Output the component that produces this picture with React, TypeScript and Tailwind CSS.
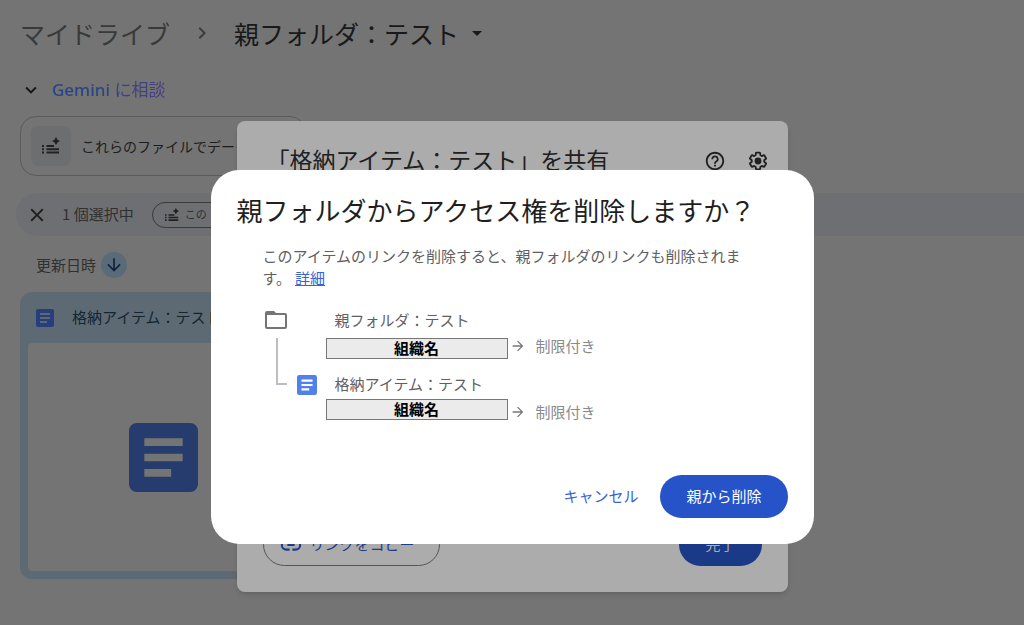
import { MdArrowDownward, MdArrowDropDown, MdArrowForward, MdChevronRight, MdClose, MdExpandMore, MdHelpOutline } from 'react-icons/md';

const fontStack = "font-['Noto_Sans_CJK_JP',sans-serif]";

function DocIcon({ className }: { className: string }) {
  return (
    <svg viewBox="0 0 18 18" className={className} aria-hidden="true">
      <path
        fill="currentColor"
        fillRule="evenodd"
        d="M2 0h14a2 2 0 0 1 2 2v14a2 2 0 0 1-2 2H2a2 2 0 0 1-2-2V2a2 2 0 0 1 2-2zM4 4v2h10V4zM4 8v2h10V8zM4 12v2h7v-2z"
      />
    </svg>
  );
}

function SummarizeIcon({ className }: { className: string }) {
  return (
    <svg viewBox="0 0 18 18" className={className} fill="currentColor" aria-hidden="true">
      <path d="M0 8h2v2H0zM4.500 8h7.500v2H4.500zM0 11.300h2v2H0zM4.500 11.300h12.500v2H4.500zM0 14.600h2v2H0zM4.500 14.600h12.500v2H4.500z" />
      <path d="M14 0Q14.900 3.100 18 4Q14.900 4.900 14 8Q13.100 4.900 10 4Q13.100 3.100 14 0z" />
    </svg>
  );
}

function FolderIcon() {
  return (
    <svg viewBox="0 0 22 18" className="h-[18px] w-[22px] text-[#757575]" aria-hidden="true">
      <path fill="currentColor" fillRule="evenodd" d="M2 0h7l2 2h9a2 2 0 0 1 2 2v12a2 2 0 0 1-2 2H2a2 2 0 0 1-2-2V2a2 2 0 0 1 2-2zM2 4v12h18V4z" />
    </svg>
  );
}

function LinkIcon() {
  return (
    <svg viewBox="0 0 24 24" className="size-[22px]" fill="none" stroke="currentColor" strokeWidth="2.300" aria-hidden="true">
      <path d="M10.500 17H7A5 5 0 0 1 7 7h3.500M13.500 7H17a5 5 0 0 1 0 10h-3.500M8 12h8" />
    </svg>
  );
}

function GearIcon() {
  return (
    <svg viewBox="0 0 24 24" className="size-5" fill="none" stroke="currentColor" strokeWidth="2.200" strokeLinejoin="round" aria-hidden="true">
      <path d="M19.430 12.980c.04-.32.07-.64.07-.98 0-.34-.03-.66-.07-.98l2.110-1.650c.19-.15.24-.42.12-.64l-2-3.460a.5.5 0 0 0-.61-.22l-2.490 1c-.52-.4-1.080-.73-1.690-.98l-.38-2.650A.488.488 0 0 0 14 2h-4c-.25 0-.46.18-.49.42l-.38 2.650c-.61.25-1.170.59-1.690.98l-2.490-1a.566.566 0 0 0-.18-.03c-.17 0-.34.09-.43.25l-2 3.460c-.13.22-.07.49.12.64l2.110 1.650c-.04.32-.07.65-.07.98 0 .33.03.66.07.98l-2.110 1.650c-.19.15-.24.42-.12.64l2 3.460a.5.5 0 0 0 .61.22l2.490-1c.52.4 1.080.73 1.690.98l.38 2.650c.03.24.24.42.49.42h4c.25 0 .46-.18.49-.42l.38-2.650c.61-.25 1.170-.59 1.690-.98l2.490 1c.06.02.12.03.18.03.17 0 .34-.09.43-.25l2-3.460c.12-.22.07-.49-.12-.64z" />
      <circle cx="12" cy="12" r="3" fill="currentColor" />
    </svg>
  );
}

function DriveView() {
  return (
    <main className="text-[#303030]">
      <nav className="flex h-[66px] items-center pl-5 text-[25px] leading-8">
        <a href="#" className="text-[#393939]">マイドライブ</a>
        <MdChevronRight className="mx-5 size-6 text-[#3c3c3c]" />
        <button className="flex items-center gap-1.5 text-[#191919]">
          親フォルダ：テスト
          <MdArrowDropDown className="size-6" />
        </button>
      </nav>

      <button className="flex h-12 items-center gap-2.5 pl-5 text-[17px] leading-6">
        <MdExpandMore className="size-[22px] text-[#161616]" />
        <span className="bg-linear-to-r from-[#234389] via-[#2d4486] to-[#4a4080] bg-clip-text font-['Noto_Sans','Noto_Sans_CJK_JP',sans-serif] text-transparent">
          <span className="font-medium">Gemini</span> に相談
        </span>
      </button>

      <button className="mt-0.5 ml-5 flex h-[60px] w-[286px] items-center gap-2.5 rounded-2xl border border-[#5b5b5b] pl-2.5 text-sm text-[#1d1d1d]">
        <span className="flex size-10 items-center justify-center rounded-lg bg-[#6d6e70]">
          <SummarizeIcon className="size-[18px] text-[#1f2124]" />
        </span>
        これらのファイルでデータ
      </button>

      <div className="mt-[17px] ml-4 flex h-[43px] items-center rounded-l-full bg-[#6e6f72] pl-2.5">
        <button aria-label="選択を解除">
          <MdClose className="size-[22px] text-[#1f1f1f]" />
        </button>
        <span className="ml-3.5 text-[15px]">1 個選択中</span>
        <button className="ml-[18px] flex h-[26px] w-28 items-center gap-1.5 rounded-full border border-[#3a3a3a] px-3 text-[11px]">
          <SummarizeIcon className="size-3.5 text-[#202020]" />
          この
        </button>
      </div>

      <button className="mt-4 ml-9 flex items-center gap-[5px] text-[15px]">
        更新日時
        <span className="flex size-[26px] items-center justify-center rounded-full bg-[#596b79]">
          <MdArrowDownward className="size-5 text-[#10233f]" />
        </span>
      </button>

      <article className="mt-3.5 ml-5 w-[286px] rounded-xl bg-[#5d6a74] px-2 pb-2">
        <h2 className="flex h-[51px] items-center gap-[18px] pl-2 text-[15px] text-[#142532]">
          <DocIcon className="size-[18px] text-[#263f7c]" />
          格納アイテム：テスト
        </h2>
        <div className="flex h-[228px] items-center justify-center rounded bg-[#747474]">
          <DocIcon className="size-[69px] text-[#263c6e]" />
        </div>
      </article>
    </main>
  );
}

function ShareDialog() {
  return (
    <section className="flex h-[471px] w-[551px] flex-col justify-between rounded-lg bg-[#acacac] px-[26px] pt-[22px] pb-[26px] shadow-md">
      <header className="flex items-center text-[#202020]">
        <h2 className="mb-1 flex-1 pl-1 text-[23px] leading-8">「格納アイテム：テスト」を共有</h2>
        <button aria-label="ヘルプ" className="mr-[22px]">
          <MdHelpOutline className="size-[22px]" />
        </button>
        <button aria-label="設定" className="-mr-1.5">
          <GearIcon />
        </button>
      </header>
      <footer className="flex justify-between text-[15px]">
        <button className="flex h-[43px] items-center gap-2 rounded-full border border-[#555] pr-6 pl-4 text-[#1d3c89]">
          <LinkIcon />
          リンクをコピー
        </button>
        <button className="h-[43px] rounded-full bg-[#1a3986] px-[26px] text-[#aaa]">完了</button>
      </footer>
    </section>
  );
}

function AccessChange({ className }: { className: string }) {
  return (
    <div className={`flex text-[15px] ${className}`}>
      <span className="h-[21px] w-[182px] border border-[#777] bg-[#ebebeb] text-center leading-[18px] font-bold text-black">組織名</span>
      <span className="ml-0.5 flex items-center gap-2.5 leading-4 text-[#8a8a8a]">
        <MdArrowForward className="size-4 text-[#777]" />
        制限付き
      </span>
    </div>
  );
}

function ConfirmDialog() {
  return (
    <section role="dialog" aria-labelledby="confirm-title" className="w-[603px] rounded-[28px] bg-white px-[26px] pt-[22px] pb-[26px] text-[15px] text-[#5f6062]">
      <h1 id="confirm-title" className="text-[26px] leading-9 whitespace-nowrap text-[#1f1f1f]">
        親フォルダからアクセス権を削除しますか？
      </h1>
      <div className="mt-[17px] px-[26px]">
        <p className="w-[482px] leading-[22px]">
          このアイテムのリンクを削除すると、親フォルダのリンクも削除されます。
          <a href="#" className="ml-1 text-[#3763d4] underline">詳細</a>
        </p>
        <div className="mt-[19px] flex">
          <div className="w-[63px] pt-[3px] pl-0.5">
            <FolderIcon />
            <div className="mt-[9px] flex items-end">
              <span className="ml-[11px] h-[47px] w-[11px] border-b-2 border-l-2 border-[#bdbdc3]" />
              <DocIcon className="-mb-2.5 ml-2.5 size-5 text-[#4f80ec]" />
            </div>
          </div>
          <ul>
            <li>
              <h3 className="mb-1.5 pl-[9px] leading-6">親フォルダ：テスト</h3>
              <AccessChange className="items-start" />
            </li>
            <li className="mt-[13px]">
              <h3 className="mb-[3px] pl-[9px] leading-6">格納アイテム：テスト</h3>
              <AccessChange className="items-end" />
            </li>
          </ul>
        </div>
      </div>
      <footer className="mt-[55px] flex justify-end gap-[22px]">
        <button className="text-[#3763d4]">キャンセル</button>
        <button className="h-[43px] rounded-full bg-[#2653c8] px-[26px] text-white">親から削除</button>
      </footer>
    </section>
  );
}

export default function App() {
  return (
    <div className={`relative min-h-screen overflow-hidden bg-[#747474] ${fontStack}`}>
      <DriveView />
      <div className="absolute inset-0 flex items-center justify-center pt-22">
        <ShareDialog />
      </div>
      <div className="absolute inset-0 flex items-center justify-center pt-22">
        <ConfirmDialog />
      </div>
    </div>
  );
}
